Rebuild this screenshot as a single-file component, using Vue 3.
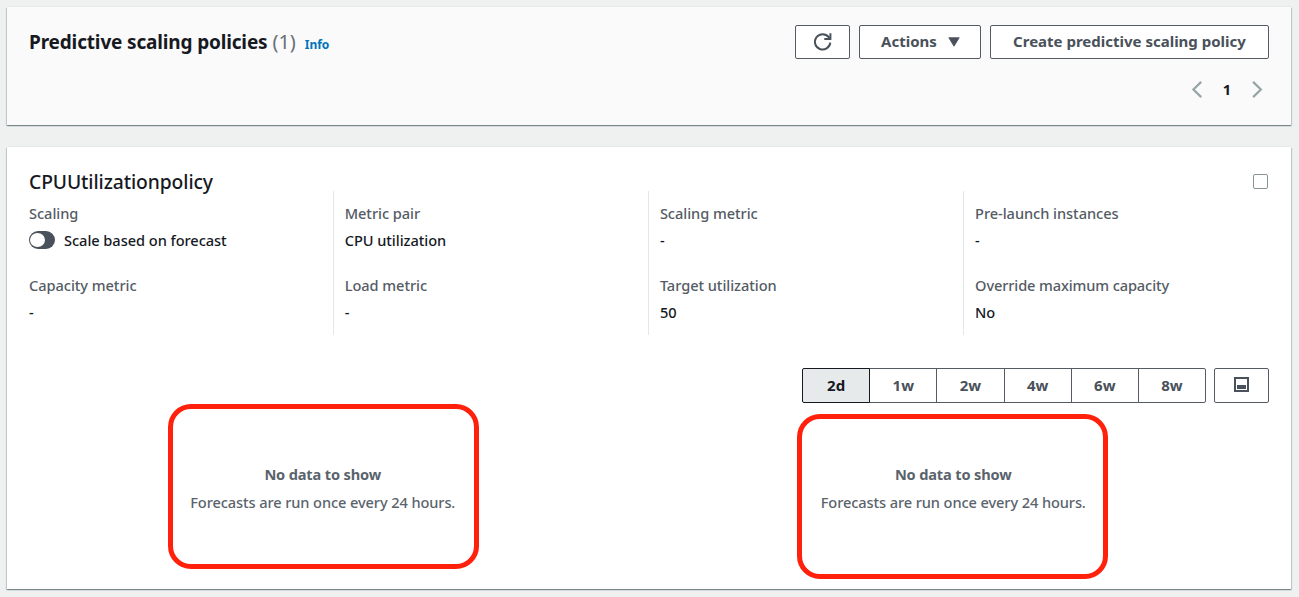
<script setup>
import { ref } from 'vue'

const columns = [
  [{ label: 'Scaling', toggle: 'Scale based on forecast' }, { label: 'Capacity metric', value: '-' }],
  [{ label: 'Metric pair', value: 'CPU utilization' }, { label: 'Load metric', value: '-' }],
  [{ label: 'Scaling metric', value: '-' }, { label: 'Target utilization', value: '50' }],
  [{ label: 'Pre-launch instances', value: '-' }, { label: 'Override maximum capacity', value: 'No', tight: true }],
]
const ranges = ['2d', '1w', '2w', '4w', '6w', '8w']
const active = ref('2d')
</script>

<template>
  <div class="page">
    <section class="card header-card">
      <div class="header-row">
        <h2 class="heading">
          <span class="heading-text">Predictive scaling policies</span>
          <span class="count">(1)</span>
          <a class="info">Info</a>
        </h2>
        <div class="actions">
          <button class="btn refresh" aria-label="Refresh">
            <svg width="20" height="20" viewBox="0 0 20 20" fill="none" stroke="currentColor" stroke-width="2">
              <path d="M17.3 10.7A7.7 7.7 0 1 1 15.7 5.1L17 6.6" />
              <path d="M17.4 1.3V6.9H11.3" />
            </svg>
          </button>
          <button class="btn menu">
            Actions
            <svg width="12" height="10" viewBox="0 0 12 10"><path d="M.8 .7H11.2L6 9.2Z" fill="currentColor" stroke="currentColor" stroke-width=".8" stroke-linejoin="round" /></svg>
          </button>
          <button class="btn create">Create predictive scaling policy</button>
        </div>
      </div>
      <nav class="pager">
        <svg width="12" height="18" viewBox="0 0 12 18"><path d="M10.2 1.9L2.4 9.5L10.2 17.1" /></svg>
        <span class="page-number">1</span>
        <svg width="12" height="18" viewBox="0 0 12 18"><path d="M2.1 1.9L9.9 9.5L2.1 17.1" /></svg>
      </nav>
    </section>

    <section class="card policy-card">
      <div class="policy-title">
        <h3>CPUUtilizationpolicy</h3>
        <span class="checkbox" role="checkbox" aria-checked="false"></span>
      </div>
      <div class="details">
        <div v-for="(column, i) in columns" :key="i" class="column">
          <div v-for="field in column" :key="field.label" class="field">
            <div class="label" :class="{ tight: field.tight }">{{ field.label }}</div>
            <div v-if="field.toggle" class="value toggle-row">
              <span class="toggle"><span class="knob"></span></span>{{ field.toggle }}
            </div>
            <div v-else class="value">{{ field.value }}</div>
          </div>
        </div>
      </div>
      <div class="toolbar">
        <div class="segments">
          <button v-for="range in ranges" :key="range" class="segment" :class="{ selected: range === active }" @click="active = range">{{ range }}</button>
        </div>
        <button class="btn layout" aria-label="Layout">
          <svg width="15" height="15" viewBox="0 0 15 15">
            <rect x="1" y="1" width="13" height="13" fill="none" stroke="currentColor" stroke-width="2" />
            <rect x="3" y="8" width="9" height="4" fill="currentColor" />
          </svg>
        </button>
      </div>
      <div class="charts">
        <div v-for="n in 2" :key="n" class="chart">
          <div class="empty-title">No data to show</div>
          <div class="empty-text">Forecasts are run once every 24 hours.</div>
          <span class="highlight" :class="'highlight-' + n"></span>
        </div>
      </div>
    </section>
  </div>
</template>

<style>
body { background: #eff1f1; }
</style>

<style scoped>
* { box-sizing: border-box; }
.page {
  width: 1299px;
  height: 597px;
  padding: 7px 8px 0 7px;
  overflow: hidden;
  background: #eff1f1;
  color: #16191f;
  font: 500 14.6px/22px "Noto Sans", sans-serif;
  letter-spacing: -0.05px;
  white-space: nowrap;
}
.card {
  background: #fff;
  box-shadow: 0 -1px 0 #e4e8e8, 0 1px 1px rgba(0, 28, 36, .3), 1px 1px 1px rgba(0, 28, 36, .15), -1px 1px 1px rgba(0, 28, 36, .15);
}
.header-card { height: 118px; padding: 18px 22px 0; background: #fafafa; }
.header-row { display: flex; justify-content: space-between; align-items: flex-start; }
.heading { display: flex; align-items: baseline; margin: 4px 0 0; font-size: 19px; line-height: 26px; }
.heading-text { letter-spacing: -0.16px; }
.count { margin-left: 5px; font-size: 20px; font-weight: 450; color: #687078; }
.info { margin-left: 9px; font-size: 12px; letter-spacing: 0; color: #0073bb; }
.actions { display: flex; gap: 9px; }
.btn {
  display: flex;
  align-items: center;
  justify-content: center;
  height: 34px;
  padding: 0 0 2px;
  border: 1px solid #545b64;
  border-radius: 2px;
  background: #fff;
  color: #49515a;
  font: 700 15px/22px "Noto Sans", sans-serif;
}
.refresh, .layout { width: 55px; }
.refresh { padding: 0; }
.menu { width: 122px; gap: 11px; padding-left: 1px; }
.menu svg { margin-top: 2px; }
.create { width: 279px; }
.pager { display: flex; justify-content: flex-end; align-items: center; height: 22px; margin-top: 19px; padding-right: 6px; }
.pager svg { fill: none; stroke: #95a5a6; stroke-width: 2.2; }
.page-number { width: 48px; text-align: center; font-weight: 700; }
.policy-card { height: 442px; margin-top: 22px; padding: 0 22px; }
.policy-title { display: flex; justify-content: space-between; height: 44px; padding-top: 22px; }
h3 { margin: 0; font-size: 19.3px; font-weight: 500; line-height: 26px; letter-spacing: -0.1px; }
.checkbox { width: 15px; height: 15px; margin: 5px 1px 0 0; border: 1px solid #879596; border-radius: 2px; }
.details { display: grid; grid-template-columns: 314.6px 315.2px 315.2px 315px; margin: 0 -11px; }
.column { height: 144px; padding: 11px 11px 0 11.1px; border-left: 1px solid #e3e7e7; }
.column:first-child { border-left-color: transparent; padding-left: 10px; }
.field { height: 72px; }
.label { color: #545b64; }
.tight { letter-spacing: -0.12px; }
.value { margin-top: 5px; }
.toggle-row { display: flex; align-items: center; gap: 9px; }
.toggle { width: 26px; height: 18px; padding: 2px 1px; border-radius: 9px; background: #49515a; }
.knob { display: block; width: 15px; height: 14px; border-radius: 50%; background: #fff; }
.toolbar { display: flex; justify-content: flex-end; gap: 8px; margin-top: 33px; }
.segments { display: flex; width: 404px; }
.segment {
  flex: 1;
  height: 35px;
  margin-left: -1px;
  padding: 0 0 2px;
  border: 1px solid #545b64;
  background: #fff;
  color: #49515a;
  font: 700 15px/22px "Noto Sans", sans-serif;
}
.segment:first-child { margin-left: 0; border-radius: 2px 0 0 2px; }
.segment:last-child { border-radius: 0 2px 2px 0; }
.segment.selected { z-index: 1; border-color: #16191f; background: #e6eaea; color: #16191f; }
.layout { height: 35px; }
.charts { display: grid; grid-template-columns: 630.5px 630.5px; margin-left: -21.5px; }
.chart { position: relative; height: 180px; padding-top: 60px; text-align: center; color: #5a636c; }
.empty-title { letter-spacing: -0.15px; font-weight: 700; }
.empty-text { margin-top: 6px; letter-spacing: -0.1px; }
.highlight { position: absolute; width: 311px; height: 165px; border: 5px solid #ff210b; border-radius: 23px; }
.highlight-1 { left: 160.5px; top: 1px; }
.highlight-2 { left: 159px; top: 11px; }
</style>
